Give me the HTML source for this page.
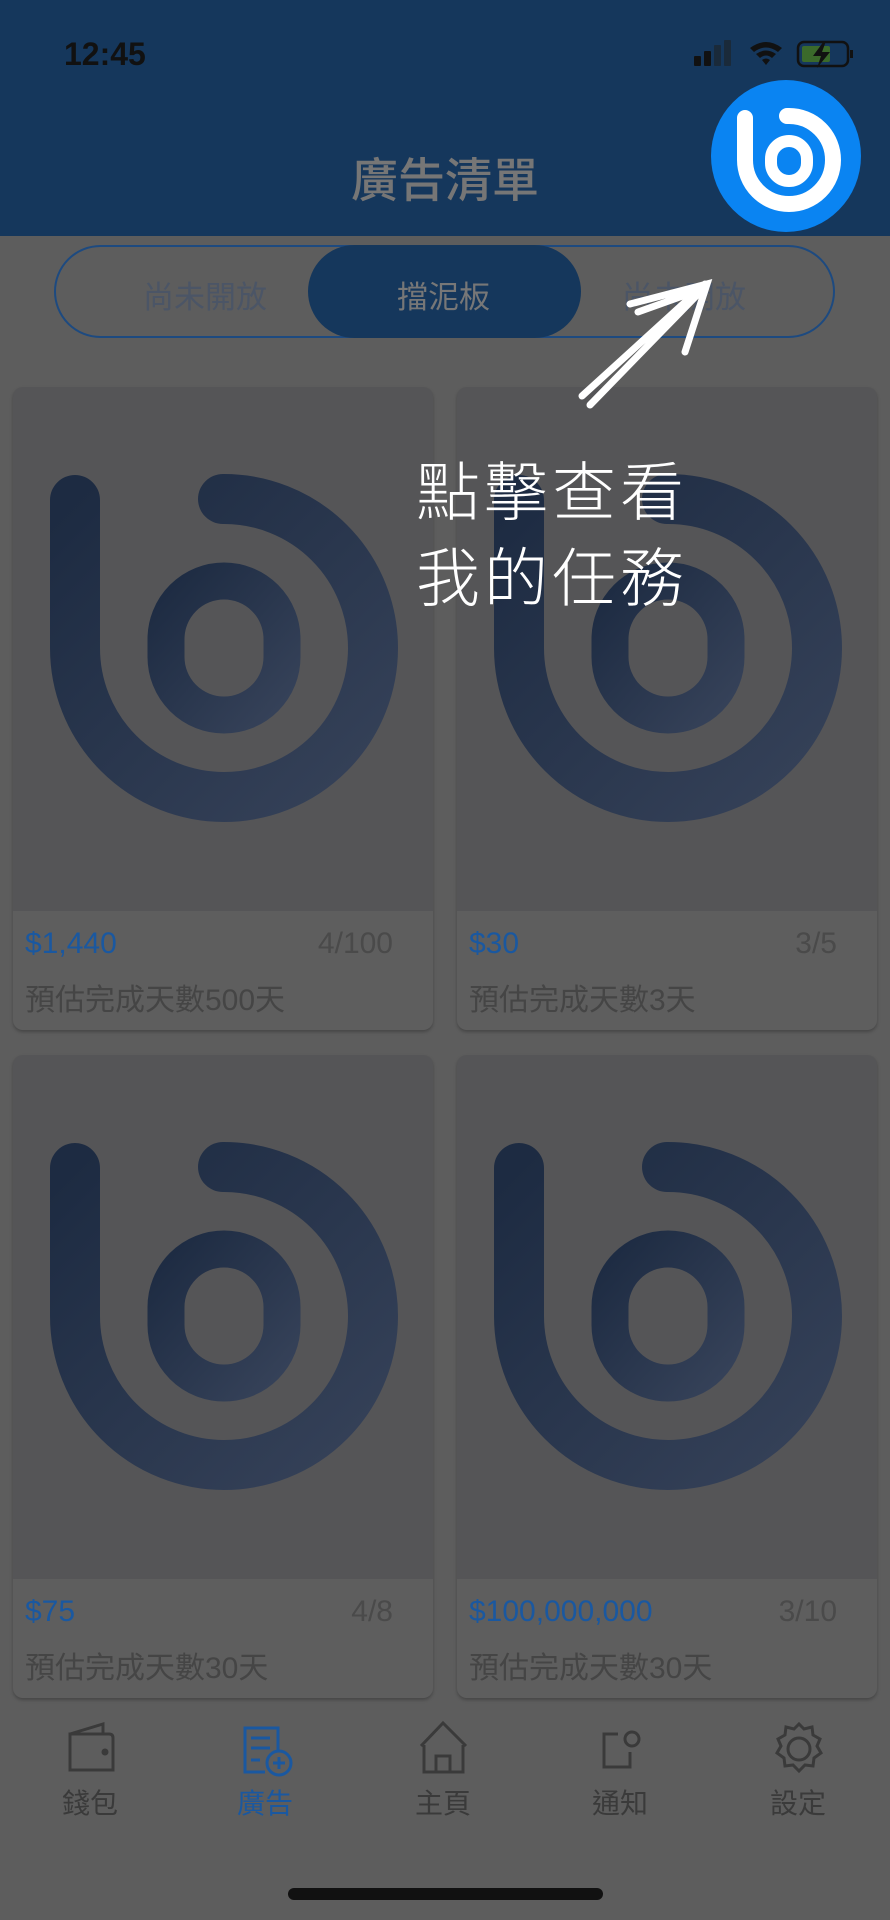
<!DOCTYPE html>
<html><head><meta charset="utf-8">
<style>
*{margin:0;padding:0;box-sizing:border-box}
body{width:890px;height:1920px;background:#5d5d5d;position:relative;overflow:hidden;font-family:"Liberation Sans","Noto Sans CJK TC",sans-serif}
.hdr{position:absolute;left:0;top:0;width:890px;height:236px;background:#15375c}
.time{position:absolute;left:64px;top:36px;font-size:32px;font-weight:bold;color:#111}
.title{position:absolute;left:0;width:890px;top:142px;text-align:center;font-size:47px;color:#767676;font-weight:500}
.seg{position:absolute;left:54px;top:245px;width:781px;height:93px;border:2px solid #1d4a80;border-radius:47px}
.pill{position:absolute;left:308px;top:245px;width:273px;height:93px;background:#15375c;border-radius:47px}
.st{position:absolute;top:272px;font-size:31px;color:#4b5566}
.card{position:absolute;width:420px;height:643px;background:#555557;border-radius:10px;overflow:hidden;box-shadow:0 2px 3px rgba(0,0,0,.25)}
.info{position:absolute;left:0;bottom:0;width:100%;height:119px;background:#5e5e5e}
.price{position:absolute;left:12px;top:16px;font-size:30px;color:#1a58a0}
.cnt{position:absolute;right:40px;top:16px;font-size:30px;color:#4a4a4a}
.desc{position:absolute;left:12px;top:64px;font-size:30px;color:#454545}
.logo{position:absolute;left:0;top:0}
.tab{position:absolute;top:1782px;width:120px;text-align:center;font-size:28px;color:#3a3a3a}
.hand{position:absolute;left:416px;font-size:64px;color:#fff;letter-spacing:4px;font-family:"Noto Sans CJK TC",sans-serif;font-weight:300}
</style></head><body>
<div class="hdr"></div>
<div class="time">12:45</div>
<svg style="position:absolute;left:694px;top:40px" width="190" height="32">
<rect x="0" y="16" width="7" height="10" rx="1" fill="#111"/><rect x="10" y="11" width="7" height="15" rx="1" fill="#111"/><rect x="20" y="5" width="7" height="21" rx="1" fill="#1a2a3a"/><rect x="30" y="0" width="7" height="26" rx="1" fill="#1a2a3a"/>
<path d="M56 8 Q72 -4 88 8 L84 12 Q72 3 60 12Z M62 14 Q72 7 82 14 L78 18 Q72 13 66 18Z M68 20 Q72 17 76 20 L72 25Z" fill="#111"/>
<rect x="104" y="2" width="50" height="24" rx="6" fill="none" stroke="#111" stroke-width="2.5"/><rect x="108" y="6" width="28" height="16" rx="2" fill="#3b6a2b"/><rect x="156" y="10" width="3" height="8" fill="#111"/>
<path d="M130 1 L119 16 L127 16 L123 28 L136 12 L128 12 L132 1Z" fill="#111"/>
</svg>
<div class="title">廣告清單</div>
<svg style="position:absolute;left:711px;top:80px" width="150" height="152" viewBox="0 0 150 152">
<ellipse cx="75" cy="76" rx="75" ry="76" fill="#0a84f2"/>
<g fill="none" stroke="#fff" stroke-linecap="round">
<path d="M34 38 V80 A44 44 0 1 0 78 36 H76" stroke-width="16"/>
<rect x="60" y="61" width="36" height="40" rx="18" stroke-width="12"/>
</g></svg>
<div class="seg"></div><div class="pill"></div>
<div class="st" style="left:143px">尚未開放</div>
<div class="st" style="left:397px;color:#777">擋泥板</div>
<div class="st" style="left:622px">尚未開放</div>

<svg width="0" height="0" style="position:absolute"><defs><linearGradient id="g" x1="0" y1="0" x2="1" y2="1"><stop offset="0" stop-color="#1d2b42"/><stop offset="1" stop-color="#364259"/></linearGradient></defs></svg>
<div class="card" style="left:13px;top:387px"><svg class="logo" width="420" height="525"><g fill="none" stroke="url(#g)" stroke-linecap="round"><path d="M62 113 V261 A149 149 0 1 0 211 112 H210" stroke-width="50"/><rect x="153" y="194" width="116" height="134" rx="58" stroke-width="37"/></g></svg><div class="info"><div class="price">$1,440</div><div class="cnt">4/100</div><div class="desc">預估完成天數500天</div></div></div>
<div class="card" style="left:457px;top:387px"><svg class="logo" width="420" height="525"><g fill="none" stroke="url(#g)" stroke-linecap="round"><path d="M62 113 V261 A149 149 0 1 0 211 112 H210" stroke-width="50"/><rect x="153" y="194" width="116" height="134" rx="58" stroke-width="37"/></g></svg><div class="info"><div class="price">$30</div><div class="cnt">3/5</div><div class="desc">預估完成天數3天</div></div></div>
<div class="card" style="left:13px;top:1055px"><svg class="logo" width="420" height="525"><g fill="none" stroke="url(#g)" stroke-linecap="round"><path d="M62 113 V261 A149 149 0 1 0 211 112 H210" stroke-width="50"/><rect x="153" y="194" width="116" height="134" rx="58" stroke-width="37"/></g></svg><div class="info"><div class="price">$75</div><div class="cnt">4/8</div><div class="desc">預估完成天數30天</div></div></div>
<div class="card" style="left:457px;top:1055px"><svg class="logo" width="420" height="525"><g fill="none" stroke="url(#g)" stroke-linecap="round"><path d="M62 113 V261 A149 149 0 1 0 211 112 H210" stroke-width="50"/><rect x="153" y="194" width="116" height="134" rx="58" stroke-width="37"/></g></svg><div class="info"><div class="price">$100,000,000</div><div class="cnt">3/10</div><div class="desc">預估完成天數30天</div></div></div>

<svg style="position:absolute;left:560px;top:270px" width="170" height="150">
<g fill="none" stroke="#fff" stroke-linecap="round" stroke-width="7">
<path d="M22 126 L145 14 M30 135 L140 22 M70 34 L147 14 L125 82 M78 42 L145 18"/>
</g></svg>
<div class="hand" style="top:442px">點擊查看</div>
<div class="hand" style="top:528px">我的任務</div>

<svg style="position:absolute;left:0;top:1720px" width="890" height="60" fill="none" stroke="#3a3a3a" stroke-width="3">
<path d="M70 14 L103 4 V14 M70 14 H109 Q113 14 113 18 V50 H70 Z"/><circle cx="105" cy="32" r="2" fill="#3a3a3a"/>
<g stroke="#1a58a0"><path d="M278 32 V8 H245 V52 H265"/><path d="M251 18 H270 M251 28 H270 M251 40 H260"/><circle cx="279" cy="43" r="12"/><path d="M273 43 H285 M279 37 V49"/></g>
<path d="M421 26 L443 3 L466 26 M424 25 V52 H463 V25 M436 52 V36 H450 V52"/>
<path d="M618 14 H604 V47 H630 V32"/><circle cx="632" cy="19" r="7"/>
<circle cx="799" cy="29" r="11"/><path d="M799 4 L804 9 L812 7 L813 15 L820 19 L817 26 L821 33 L814 38 L813 46 L805 45 L799 51 L793 45 L785 46 L784 38 L777 33 L781 26 L778 19 L785 15 L786 7 L794 9 Z"/>
</svg>
<div class="tab" style="left:30px">錢包</div>
<div class="tab" style="left:205px;color:#1a58a0">廣告</div>
<div class="tab" style="left:383px">主頁</div>
<div class="tab" style="left:560px">通知</div>
<div class="tab" style="left:738px">設定</div>
<div style="position:absolute;left:288px;top:1888px;width:315px;height:12px;border-radius:6px;background:#111"></div>
</body></html>
